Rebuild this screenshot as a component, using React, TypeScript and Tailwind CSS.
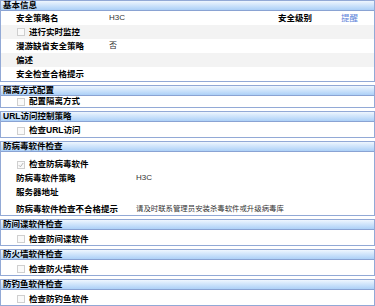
import React from 'react'

type Row = {
  label: string
  check?: boolean
  checked?: boolean
  value?: string
  extra?: boolean
  h?: string
  small?: boolean
}

type Section = {
  title: string
  valueX: string
  rows: Row[]
  striped?: boolean
}

const sections: Section[] = [
  {
    title: '基本信息',
    valueX: 'w-[93px]',
    striped: true,
    rows: [
      { label: '安全策略名', value: 'H3C', extra: true },
      { label: '进行实时监控', check: true },
      { label: '漫游缺省安全策略', value: '否' },
      { label: '偏述' },
      { label: '安全检查合格提示' },
    ],
  },
  {
    title: '隔离方式配置',
    valueX: 'w-[93px]',
    rows: [{ label: '配置隔离方式', check: true, h: 'h-[11px]' }],
  },
  {
    title: 'URL访问控制策略',
    valueX: 'w-[93px]',
    rows: [{ label: '检查URL访问', check: true, h: 'h-[15px] pt-[2px]' }],
  },
  {
    title: '防病毒软件检查',
    valueX: 'w-[120px]',
    rows: [
      { label: '检查防病毒软件', check: true, checked: true, h: 'h-[18px] pt-[7px]' },
      { label: '防病毒软件策略', value: 'H3C', h: 'h-[14px] pt-[2px]' },
      { label: '服务器地址', h: 'h-[14px] pt-[2px]' },
      {
        label: '防病毒软件检查不合格提示',
        value: '请及时联系管理员安装杀毒软件或升级病毒库',
        small: true,
        h: 'h-[17px] pt-[5px]',
      },
    ],
  },
  { title: '防间谍软件检查', valueX: 'w-[93px]', rows: [{ label: '检查防间谍软件', check: true, h: 'h-[15px] pt-[3px]' }] },
  { title: '防火墙软件检查', valueX: 'w-[93px]', rows: [{ label: '检查防火墙软件', check: true, h: 'h-[15px] pt-[3px]' }] },
  { title: '防钓鱼软件检查', valueX: 'w-[93px]', rows: [{ label: '检查防钓鱼软件', check: true, h: 'h-[15px] pt-[3px]' }] },
]

const CheckBox = ({ checked }: { checked?: boolean }) => (
  <span className="mr-[4px] flex h-[8px] w-[8px] items-center justify-center border border-[#cfcfcf] bg-[#fafafa]">
    {checked && (
      <svg width="6" height="6" viewBox="0 0 6 6">
        <path d="M0.8 3.2 L2.4 4.8 L5.2 1" fill="none" stroke="#b5b5b5" strokeWidth="1" />
      </svg>
    )}
  </span>
)

const Panel = ({ s }: { s: Section }) => (
  <div className="mb-[3px] border border-[#92a9d6] bg-white">
    <div className="flex h-[10px] items-center border-b border-[#8aa3d3] bg-gradient-to-b from-[#eef6fe] to-[#acd0f7] pl-[2px] text-[8.5px] font-bold leading-none text-black">
      {s.title}
    </div>
    {s.rows.map((r, i) => (
      <div
        key={i}
        className={`flex items-center pl-[15px] text-[8.5px] leading-none ${r.h ? r.h : 'h-[14px]'} ${
          s.striped && i % 2 === 1 ? 'bg-[#f3f3f3]' : 'bg-white'
        }`}
      >
        {r.check ? (
          <div className="ml-px flex items-center">
            <CheckBox checked={r.checked} />
            <span className="font-bold text-black">{r.label}</span>
          </div>
        ) : (
          <>
            <span className={`${s.valueX} shrink-0 font-bold text-black`}>{r.label}</span>
            {r.value && (
              <span
                className={`${r.extra ? 'w-[169px] shrink-0' : ''} ${
                  r.small ? 'text-[7.4px]' : 'text-[8px]'
                } text-[#333]`}
              >
                {r.value}
              </span>
            )}
            {r.extra && (
              <>
                <span className="w-[63px] shrink-0 font-bold text-black">安全级别</span>
                <span className="text-[#5b7fd8]">提醒</span>
              </>
            )}
          </>
        )}
      </div>
    ))}
  </div>
)

export default function App() {
  return (
    <div
      className="h-[306px] w-[375px] overflow-hidden bg-white"
      style={{ fontFamily: '"Liberation Sans", "Noto Sans CJK SC", sans-serif' }}
    >
      {sections.map((s, i) => (
        <Panel key={i} s={s} />
      ))}
    </div>
  )
}
